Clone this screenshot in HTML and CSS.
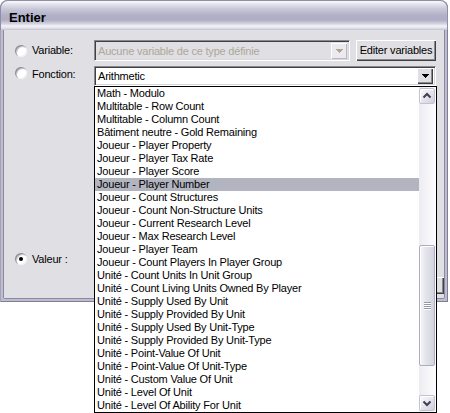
FILE: index.html
```html
<!DOCTYPE html>
<html lang="fr">
<head>
<meta charset="utf-8">
<title>Entier</title>
<link rel="stylesheet" href="styles.css">
</head>
<body>
<div class="window">
  <div class="titlebar"><span class="title">Entier</span></div>
  <div class="client">
    <div class="row row-var">
      <span class="radio"></span><span class="label">Variable:</span>
      <div class="combo combo-var disabled">
        <span class="combo-text">Aucune variable de ce type définie</span>
        <span class="dropbtn"><svg width="16" height="16" viewBox="0 0 16 16"><path d="M4 6h8l-4 4z" fill="#aca899" shape-rendering="crispEdges"/></svg></span>
      </div>
      <button class="btn" type="button">Editer variables</button>
    </div>
    <div class="row row-fn">
      <span class="radio"></span><span class="label">Fonction:</span>
      <div class="combo combo-fn">
        <span class="combo-text">Arithmetic</span>
        <span class="dropbtn"><svg width="16" height="16" viewBox="0 0 16 16"><path d="M4 6h8l-4 4z" fill="#000" shape-rendering="crispEdges"/></svg></span>
      </div>
    </div>
    <div class="row row-val">
      <span class="radio checked"></span><span class="label">Valeur :</span>
    </div>
    <div class="footer"><span class="okbtn"></span></div>
  </div>
</div>

<div class="dropdown">
  <ul class="items">
    <li>Math - Modulo</li>
    <li>Multitable - Row Count</li>
    <li>Multitable - Column Count</li>
    <li>Bâtiment neutre - Gold Remaining</li>
    <li>Joueur - Player Property</li>
    <li>Joueur - Player Tax Rate</li>
    <li>Joueur - Player Score</li>
    <li class="selected">Joueur - Player Number</li>
    <li>Joueur - Count Structures</li>
    <li>Joueur - Count Non-Structure Units</li>
    <li>Joueur - Current Research Level</li>
    <li>Joueur - Max Research Level</li>
    <li>Joueur - Player Team</li>
    <li>Joueur - Count Players In Player Group</li>
    <li>Unité - Count Units In Unit Group</li>
    <li>Unité - Count Living Units Owned By Player</li>
    <li>Unité - Supply Used By Unit</li>
    <li>Unité - Supply Provided By Unit</li>
    <li>Unité - Supply Used By Unit-Type</li>
    <li>Unité - Supply Provided By Unit-Type</li>
    <li>Unité - Point-Value Of Unit</li>
    <li>Unité - Point-Value Of Unit-Type</li>
    <li>Unité - Custom Value Of Unit</li>
    <li>Unité - Level Of Unit</li>
    <li>Unité - Level Of Ability For Unit</li>
  </ul>
  <div class="scrollbar">
    <span class="sbtn"><svg width="14" height="14" viewBox="0 0 14 14"><path d="M3.5 8.5L7 5l3.5 3.5" fill="none" stroke="#3f3f4e" stroke-width="2"/></svg></span>
    <div class="track">
      <div class="thumb" style="margin-top:141px">
        <span class="grip"><i></i><i></i><i></i><i></i></span>
      </div>
    </div>
    <span class="sbtn"><svg width="14" height="14" viewBox="0 0 14 14"><path d="M3.5 5.5L7 9l3.5-3.5" fill="none" stroke="#3f3f4e" stroke-width="2"/></svg></span>
  </div>
</div>
</body>
</html>
```
FILE: styles.css
```css
html, body {
  margin: 0;
  padding: 0;
  background: #ffffff;
}
body {
  position: relative;
  width: 450px;
  height: 413px;
  overflow: hidden;
  font-family: "Liberation Sans", Arial, sans-serif;
  font-size: 11px;
  letter-spacing: -0.2px;
  color: #000;
}

.window {
  width: 448px;
  height: 302px;
  box-sizing: border-box;
  display: flex;
  flex-direction: column;
  background: #bebdd0;
  border-radius: 8px 8px 0 0;
  box-shadow: inset 1px 0 0 #a3a2b9, inset -1px -1px 0 #7f7e98;
}

.titlebar {
  height: 30px;
  box-sizing: border-box;
  padding: 4px 0 0 8px;
  line-height: 26px;
  border-radius: 8px 8px 0 0;
  border: 1px solid #8f8ea8;
  border-bottom: none;
  background: linear-gradient(to bottom,
    #fbfbfd 0px, #e4e4ec 3px, #c9c8d9 8px, #b2b1c8 14px, #aeadc5 19px,
    #d6d6e2 23px, #f4f4f7 25px, #e2e2ea 27px, #c3c2d3 29px, #a9a8be 30px);
}
.title {
  font-weight: bold;
  font-size: 13px;
  letter-spacing: 0;
}

.client {
  flex: 1;
  margin: 0 4px 4px 4px;
  background: #e0dfe3;
  padding: 10px 0 4px 11px;
  display: flex;
  flex-direction: column;
  box-shadow: -1px 0 0 #8a899f, 1px 0 0 #8a899f, 0 1px 0 #8a899f;
}

.row {
  display: flex;
}
.row-var {
  height: 21px;
  align-items: center;
}
.row-fn {
  margin-top: 5px;
  height: 20px;
  align-items: flex-start;
}
.row-fn .radio { margin-top: 1px; }
.row-fn .label { margin-top: 2px; }
.row-val {
  margin-top: 167px;
  height: 13px;
  align-items: flex-start;
}

.radio {
  width: 12px;
  height: 12px;
  flex: none;
  border-radius: 50%;
  background: #fff;
  margin-right: 5px;
  box-shadow: inset 1px 1px 0 #8e8d98, inset 2px 2px 0 #c9c8cf, inset -1px -1px 0 #f2f2f4;
  position: relative;
}
.radio.checked::after {
  content: "";
  position: absolute;
  left: 4px;
  top: 4px;
  width: 4px;
  height: 4px;
  border-radius: 50%;
  background: #000;
}

.label {
  width: 62px;
  flex: none;
  line-height: 13px;
  white-space: nowrap;
}

.combo {
  box-sizing: border-box;
  display: flex;
  align-items: center;
  border-style: solid;
  border-width: 1px;
  border-color: #8a8990 #ffffff #ffffff #8a8990;
  box-shadow: inset 1px 1px 0 #404040, inset -1px -1px 0 #d8d7dc;
  padding: 2px;
}
.combo-text {
  flex: 1;
  padding-left: 1px;
  white-space: nowrap;
  overflow: hidden;
  line-height: 14px;
}
.combo-var {
  width: 256px;
  height: 21px;
  background: #e0dfe3;
  margin-right: 6px;
}
.combo-var .combo-text {
  color: #aca899;
}
.combo-fn {
  width: 342px;
  height: 20px;
  background: #fff;
}
.dropbtn {
  width: 16px;
  height: 16px;
  flex: none;
  box-sizing: border-box;
  background: #e0dfe3;
  display: flex;
  align-items: center;
  justify-content: center;
  box-shadow: inset 1px 1px 0 #fff, inset -1px -1px 0 #404040, inset -2px -2px 0 #8a8990;
}
.combo-var .dropbtn {
  background: #eceaef;
  box-shadow: inset 1px 1px 0 #fff, inset -1px -1px 0 #b9b8c2;
}
.dropbtn svg { display: block; }

.btn {
  width: 80px;
  height: 21px;
  box-sizing: border-box;
  margin: 0;
  padding: 0 0 1px 0;
  font: inherit;
  letter-spacing: -0.2px;
  color: #000;
  background: #e0dfe3;
  border: none;
  box-shadow: inset 1px 1px 0 #ffffff, inset -1px -1px 0 #404040, inset -2px -2px 0 #8a8990;
  white-space: nowrap;
}

.footer {
  margin-top: auto;
  display: flex;
  justify-content: flex-end;
}
.okbtn {
  width: 70px;
  height: 17px;
  background: #e0dfe3;
  box-shadow: inset 1px 1px 0 #ffffff, inset -1px -1px 0 #404040, inset -2px -2px 0 #8a8990;
}

.dropdown {
  position: absolute;
  left: 94px;
  top: 86px;
  width: 343px;
  height: 327px;
  box-sizing: border-box;
  border: 1px solid #000;
  background: #fff;
  display: flex;
}
.items {
  flex: 1;
  margin: 0;
  padding: 0;
  list-style: none;
}
.items li {
  height: 13px;
  line-height: 13px;
  padding-left: 2px;
  white-space: nowrap;
}
.items li.selected {
  background: #b2b4bf;
}

.scrollbar {
  width: 17px;
  box-sizing: border-box;
  padding: 1px 1px 1px 0;
  display: flex;
  flex-direction: column;
  background: linear-gradient(to right, #ebebf1 0%, #f7f7fa 60%, #fdfdfe 100%);
}
.sbtn {
  width: 16px;
  height: 16px;
  flex: none;
  box-sizing: border-box;
  border: 1px solid #c3c2d2;
  border-radius: 2px;
  background: linear-gradient(135deg, #fbfbfd 0%, #e3e3ec 55%, #cfcfdc 100%);
  box-shadow: inset 1px 1px 0 #ffffff;
  display: flex;
  align-items: center;
  justify-content: center;
}
.sbtn svg { display: block; }
.track {
  flex: 1;
}
.thumb {
  width: 16px;
  height: 121px;
  box-sizing: border-box;
  border: 1px solid #aeadc0;
  border-radius: 2px;
  background: linear-gradient(to right, #f6f6f9 0%, #e4e4ec 40%, #d4d4e0 100%);
  box-shadow: inset 1px 1px 0 #ffffff;
  display: flex;
  align-items: center;
  justify-content: center;
}
.grip {
  display: flex;
  flex-direction: column;
  gap: 1px;
}
.grip i {
  display: block;
  width: 7px;
  height: 1px;
  background: #9897ac;
  box-shadow: 0 1px 0 #ffffff;
}
```
